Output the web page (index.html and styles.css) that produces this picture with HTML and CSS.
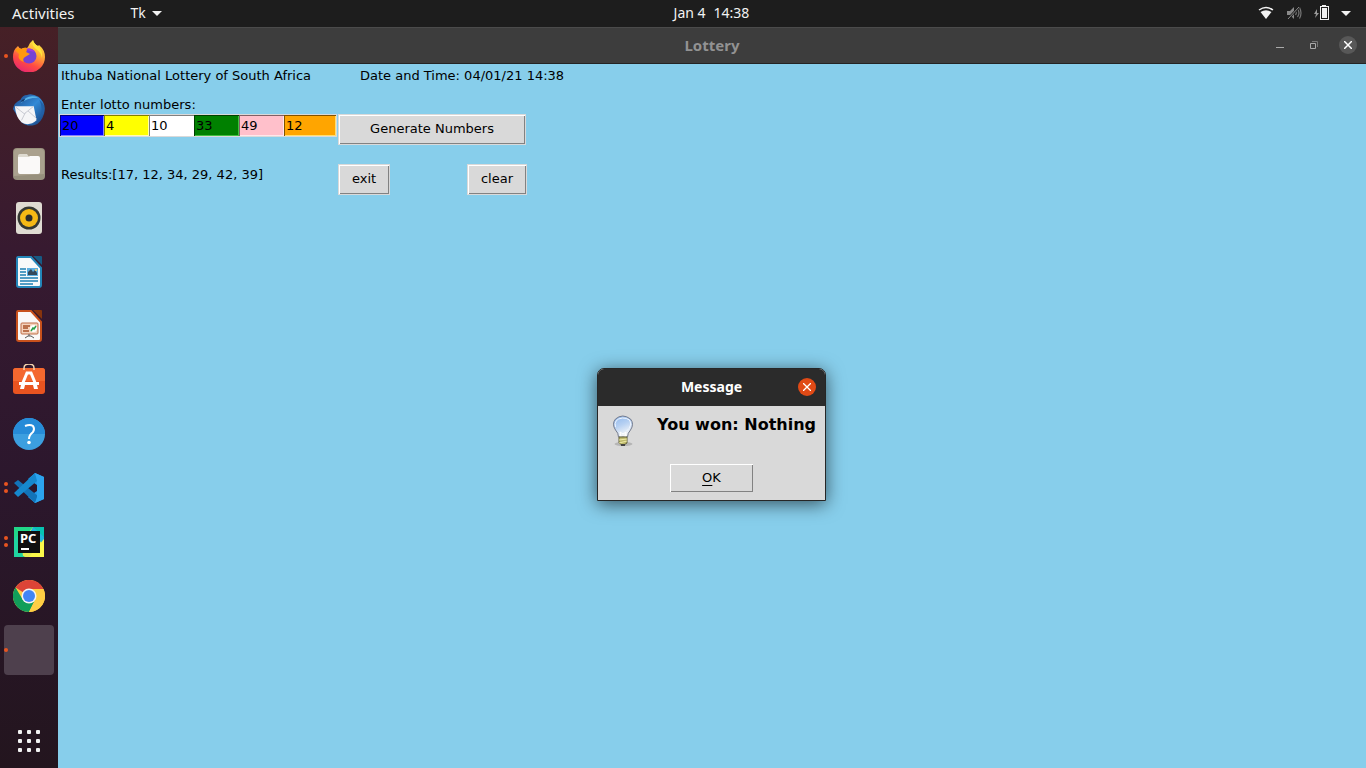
FILE: index.html
```html
<!DOCTYPE html>
<html lang="en">
<head>
<meta charset="utf-8">
<title>Lottery</title>
<link rel="stylesheet" href="styles.css">
</head>
<body>
<header class="topbar">
  <div class="topbar-left">
    <button class="bar-btn activities">Activities</button>
    <button class="bar-btn app-menu">Tk <svg width="10" height="5" viewBox="0 0 10 5"><path d="M0 0h10L5 5z" fill="#f2f2f2"/></svg></button>
  </div>
  <button class="bar-btn clock"><span>Jan 4</span><span>14:38</span></button>
  <button class="bar-btn status" aria-label="System menu">
    <svg width="16" height="14" viewBox="0 0 16 14"><path d="M1 4Q8-1 15 4" fill="none" stroke="#f2f2f2" stroke-width="1.500"/><path d="M2.500 6Q8 2.300 13.500 6L8 13z" fill="#f2f2f2"/></svg>
    <svg width="16" height="14" viewBox="0 0 16 14"><path d="M1 5h3l4-4v12L4 9H1z" fill="#8a8a8a"/><path d="M9.500 5q1.500 2 0 4M11.500 3q3 4 0 8M13.500 1.500q3 5.500 0 11" fill="none" stroke="#777" stroke-width="1.200"/><path d="M2 13L13 1" stroke="#1d1d1d" stroke-width="2.500"/><path d="M2 13L13 1" stroke="#8a8a8a"/></svg>
    <svg width="15" height="16" viewBox="0 0 15 16"><path d="M3 4L0 9h2l-1 4 4-5H3z" fill="#999"/><path d="M8 0h4v2H8z" fill="#f2f2f2"/><rect x="6.500" y="1.500" width="8" height="13" fill="none" stroke="#f2f2f2"/><path d="M8 3h5v10H8z" fill="#f2f2f2"/></svg>
    <svg width="10" height="5" viewBox="0 0 10 5"><path d="M0 0h10L5 5z" fill="#f2f2f2"/></svg>
  </button>
</header>

<div class="desktop">
  <nav class="dock" aria-label="Dock">
    <button class="launcher one" aria-label="Firefox"><svg viewBox="0 0 32 32">
      <defs><linearGradient id="fx" x1=".8" y1="0" x2=".3" y2="1"><stop offset="0" stop-color="#fff044"/><stop offset=".4" stop-color="#ffa436"/><stop offset=".7" stop-color="#ff4a43"/><stop offset="1" stop-color="#e62672"/></linearGradient></defs>
      <path d="M5 6q1 2 3 3 3-2 6-1l1-1q1-4 5-7 1 4 5 6l1-1q6 5 6 12A16 15.500 0 0 1 0 17Q0 10 4 7z" fill="url(#fx)"/>
      <circle cx="16" cy="16" r="7.500" fill="#7542d5"/><path d="M12 9q7-2 10 3l-5-1z" fill="#a13be0"/>
      <path d="M2 10q3-3 7-1 3-2 5-1 0 3-1 4l4 2-5 3q-3 2-1 5-7-2-5-8z" fill="#ff980e"/><path d="M20 0q1 4 5 6 5 5 4 12-1-6-6-9-5-3-3-9z" fill="#ffe63a"/></svg></button>
    <button class="launcher" aria-label="Thunderbird"><svg viewBox="0 0 34 34">
      <defs><linearGradient id="tb" x1="0" y1="0" x2="1" y2="1"><stop offset="0" stop-color="#1c4788"/><stop offset=".5" stop-color="#3289d6"/><stop offset="1" stop-color="#153c78"/></linearGradient></defs>
      <path d="M0 16Q1 9 8 6 10 1 15 1 20-1 27 3 36 10 33 21 30 31 23 33q-8 2-14-3z" fill="url(#tb)"/><path d="M8 10q8-11 19-6Q14 4 8 10z" fill="#58b5ea"/><path d="M28 6q5 10 0 20 6-6 5-14z" fill="#2260a7"/>
      <path d="M2 13l20 0 3 15q-8 7-16 2-6-5-7-17z" fill="#f5f5f7"/><path d="M3 14l9 7 10-8M9 28l4-8M25 26l-9-8" fill="none" stroke="#c5c8d0"/><path d="M8 8q2-3 5-3l-2 3z" fill="#123b6e"/></svg></button>
    <button class="launcher" aria-label="Files"><svg viewBox="0 0 32 32"><rect width="32" height="32" rx="4" fill="#97907d"/><path d="M1 28V4q0-3 3-3h24q3 0 3 3v22z" fill="#aaa18e"/><path d="M5 23V8q0-2 2-2h7l2 3v14z" fill="#dedbd1"/><path d="M5 9h10l2-1h8q2 0 2 2v14q0 2-2 2H7q-2 0-2-2z" fill="#faf9f8"/></svg></button>
    <button class="launcher" aria-label="Rhythmbox"><svg viewBox="0 0 32 32"><rect x="3" width="26" height="32" rx="3" fill="#dfdbd2"/><circle cx="16" cy="16" r="11.500" fill="#343832"/><circle cx="16" cy="16" r="9" fill="#f5b915"/><circle cx="16" cy="16" r="3.500" fill="#292c2d"/></svg></button>
    <button class="launcher" aria-label="LibreOffice Writer"><svg viewBox="0 0 32 32"><path d="M20 0h8q1 0 1 1v8z" fill="#165a84"/><path d="M5 1h13l10 11v17q0 2-2 2H6q-2 0-2-2V3q0-2 1-2z" fill="#f7f9fa" stroke="#2386b9" stroke-width="2"/><path d="M7 13h6M7 16h6M7 19h6M7 22h18M7 25h18M7 28h13" stroke="#1c7fb2" stroke-width="1.500"/><path d="M14 12h11v8H14z" fill="#5caee0"/><path d="M15 19v-3l3-3 2 3 2-2 2 3v2z" fill="#34485a"/><circle cx="23" cy="14" r="1" fill="#ffd35c"/></svg></button>
    <button class="launcher" aria-label="LibreOffice Impress"><svg viewBox="0 0 32 32"><path d="M20 0h8q1 0 1 1v8z" fill="#87340d"/><path d="M5 1h13l10 11v17q0 2-2 2H6q-2 0-2-2V3q0-2 1-2z" fill="#faf8f7" stroke="#c8511c" stroke-width="2"/><rect x="8" y="13" width="17" height="11" rx="1" fill="#f4d3bd" stroke="#bf6d46"/><path d="M10 16h7M10 18h5M10 21h6" stroke="#a85127" stroke-width="1.300"/><circle cx="20.500" cy="18.500" r="3.500" fill="#fff"/><path d="M18 21l2-3 1 1 2-3" fill="none" stroke="#2a9e48" stroke-width="1.500"/><path d="M16 24v2M12 28l3-2h3l3 2" fill="none" stroke="#555"/></svg></button>
    <button class="launcher" aria-label="Ubuntu Software"><svg viewBox="0 0 32 32"><rect y="4" width="32" height="26" rx="3" fill="#e95420"/><path d="M0 17V7q0-3 3-3h26q3 0 3 3v10z" fill="#f4682f"/><path d="M11 6V4q0-4 5-4t5 4v2" fill="none" stroke="#f5d3ad" stroke-width="1.500"/><path d="M9 21l5-12h4l5 12" fill="none" stroke="#fff" stroke-width="3"/><path d="M6 18h20v3H6zM8 21h4l-1 4H7zM20 21h4l1 4h-4z" fill="#fff"/></svg></button>
    <button class="launcher" aria-label="Help"><svg viewBox="0 0 32 32"><circle cx="16" cy="16" r="16" fill="#3c9fe0"/><path d="M0 16a16 16 0 0 1 32 0z" fill="#268bd8"/><path d="M12 8q5-2 8 0 2 3 0 6-4 3-4 7" fill="none" stroke="#fff" stroke-width="2"/><circle cx="16" cy="24.500" r="1.800" fill="#fff"/></svg></button>
    <button class="launcher two" aria-label="Visual Studio Code"><svg viewBox="0 0 32 32"><path d="M22 1l9 4v22l-9 4-7-6 9-6V13L15 7z" fill="#2399e8"/><path d="M1 11l4-3 20 16-3 7z" fill="#1273b8"/><path d="M1 21l4 4L24 9l-2-8z" fill="#1688ce"/><path d="M22 1l9 4v22l-9 4 2-6V8z" fill="#2ca4ef"/></svg></button>
    <button class="launcher two" aria-label="PyCharm"><svg viewBox="0 0 32 32"><path d="M1 1h30v30H1z" fill="#21d789"/><path d="M20 1l11 10v20H12L1 24z" fill="#e8ed4e"/><path d="M20 1h11v16L20 7z" fill="#07c3b2"/><path d="M20 1l11 10v8L17 6z" fill="#20b5dc"/><path d="M1 13l7-7 2 25H1z" fill="#20d5a0"/><path d="M16 31l15-18v18z" fill="#fcf84a"/><path d="M5 5h22v22H5z" fill="#101010"/><text x="7" y="17" class="pc">PC</text><path d="M8 22h8v2H8z" fill="#fff"/></svg></button>
    <button class="launcher" aria-label="Chrome"><svg viewBox="0 0 32 32"><circle cx="16" cy="16" r="16" fill="#ffce44"/><path d="M16 16L2.500 7.500A16 16 0 0 1 30.500 9H16z" fill="#dc4437"/><path d="M2.500 7.500L10 20l12 0-6 12A16 16 0 0 1 2.500 7.500z" fill="#119e5a"/><path d="M16 9h14.500A16 16 0 0 1 16 32l6-12z" fill="#ffce44"/><circle cx="16" cy="16" r="7.500" fill="#f4f4f4"/><circle cx="16" cy="16" r="6" fill="#4285f4"/></svg></button>
    <button class="launcher one active" aria-label="Tk"></button>
    <button class="launcher apps" aria-label="Show Applications"><svg viewBox="0 0 32 32" fill="#f2f2f2"><rect x="5" y="5" width="4" height="4" rx="1"/><rect x="14" y="5" width="4" height="4" rx="1"/><rect x="23" y="5" width="4" height="4" rx="1"/><rect x="5" y="14" width="4" height="4" rx="1"/><rect x="14" y="14" width="4" height="4" rx="1"/><rect x="23" y="14" width="4" height="4" rx="1"/><rect x="5" y="23" width="4" height="4" rx="1"/><rect x="14" y="23" width="4" height="4" rx="1"/><rect x="23" y="23" width="4" height="4" rx="1"/></svg></button>
  </nav>

  <main class="window">
    <div class="titlebar">
      <h1 class="title">Lottery</h1>
      <div class="window-controls">
        <button class="win-btn" aria-label="Minimize"><svg width="8" height="8" viewBox="0 0 8 8"><path d="M0 6.500h8" stroke="#aaa"/></svg></button>
        <button class="win-btn" aria-label="Restore"><svg width="8" height="8" viewBox="0 0 8 8" fill="none"><path d="M.5 2.500h5v5h-5z" stroke="#aaa"/><path d="M2 .5h5.500V6" stroke="#777"/></svg></button>
        <button class="win-btn close" aria-label="Close"><svg width="8" height="8" viewBox="0 0 8 8"><path d="M0 0l8 8M8 0L0 8" stroke="#fff" stroke-width="1.500"/></svg></button>
      </div>
    </div>
    <form class="lottery">
      <div class="row heading"><span class="first">Ithuba National Lottery of South Africa</span><span>Date and Time: 04/01/21 14:38</span></div>
      <label class="row prompt" for="n1">Enter lotto numbers:</label>
      <div class="row entry-row">
        <div class="first numbers">
          <input class="number blue" id="n1" value="20">
          <input class="number yellow" value="4" aria-label="Number 2">
          <input class="number white" value="10" aria-label="Number 3">
          <input class="number green" value="33" aria-label="Number 4">
          <input class="number pink" value="49" aria-label="Number 5">
          <input class="number orange" value="12" aria-label="Number 6">
        </div>
        <button type="button" class="tk-btn generate">Generate Numbers</button>
      </div>
      <div class="row result-row">
        <output class="first results">Results:[17, 12, 34, 29, 42, 39]</output>
        <div class="actions"><button type="button" class="tk-btn">exit</button><button type="button" class="tk-btn">clear</button></div>
      </div>
    </form>
  </main>
</div>

<section class="dialog" role="dialog" aria-labelledby="dialog-title">
  <div class="dialog-bar">
    <h2 class="dialog-title" id="dialog-title">Message</h2>
    <button class="dialog-close" aria-label="Close"><svg width="8" height="8" viewBox="0 0 8 8"><path d="M0 0l8 8M8 0L0 8" stroke="#fff" stroke-width="1.300"/></svg></button>
  </div>
  <div class="dialog-body">
    <div class="message">
      <svg width="24" height="32" viewBox="0 0 24 32">
        <defs><linearGradient id="bulb" x1="0" y1="0" x2=".4" y2="1"><stop offset="0" stop-color="#8db6eb"/><stop offset=".5" stop-color="#b6d0f2"/><stop offset="1" stop-color="#f6f7f8"/></linearGradient></defs>
        <ellipse cx="12.500" cy="29" rx="9" ry="2" fill="#b5b5b5"/>
        <path d="M7.500 22q0-4-3-7-4-6 0-11 7-6 15 0 4 5 0 11-3 3-3 7z" fill="url(#bulb)" stroke="#747b8d"/><path d="M4.500 12q-2-8 7-9 9 0 8 7-1 4-4 6" fill="none" stroke="#eef5ff"/><path d="M10 22l-1-5 3 2 3-2-1 5" fill="none" stroke="#fff"/><path d="M8 22h8v6l-3 2h-2l-3-2z" fill="#bdb96b" stroke="#67653d"/><path d="M8 25l8-1M8 28l8-2" stroke="#eee9a5"/><path d="M10 29h4v2h-4z" fill="#444"/></svg>
      <p class="message-text">You won: Nothing</p>
    </div>
    <button class="tk-btn ok"><span><u>O</u>K</span></button>
  </div>
</section>
</body>
</html>
```
FILE: styles.css
```css
* { box-sizing: border-box; }
body {
  margin: 0;
  min-height: 100vh;
  display: flex;
  flex-direction: column;
  font: 13px/18px "DejaVu Sans", sans-serif;
  color: #000;
}
button, input { font: inherit; color: inherit; }
button { padding: 0; border: 0; background: none; }
h1, h2, p { margin: 0; }
svg { display: block; flex: none; }

.topbar {
  display: grid;
  grid-template-columns: 1fr auto 1fr;
  align-items: center;
  height: 27px;
  padding: 0 15px 1px 12px;
  background: #1d1d1d;
  color: #f2f2f2;
  font-family: "Noto Sans", sans-serif;
  font-size: 14px;
}
.topbar-left { display: flex; gap: 56px; }
.bar-btn { display: flex; align-items: center; gap: 6px; }
.activities { font-size: 15px; }
.clock { gap: 8px; margin-left: 60px; }
.status { justify-self: end; gap: 12px; }

.desktop { flex: 1; display: flex; }
.dock {
  width: 58px;
  display: flex;
  flex-direction: column;
  align-items: center;
  gap: 4px;
  padding: 4px 4px 2px;
  background: linear-gradient(#462026, #371a30 30%, #2c172d 60%, #23151e);
}
.launcher {
  width: 50px;
  height: 50px;
  display: grid;
  place-items: center;
  border-radius: 4px;
  position: relative;
}
.launcher svg { width: 32px; height: 32px; }
.launcher.active { background: #4e404d; }
.launcher.apps { margin-top: auto; }
.one::before, .two::before, .two::after {
  content: "";
  position: absolute;
  left: 0;
  top: 23px;
  width: 4px;
  height: 4px;
  border-radius: 50%;
  background: #e95420;
}
.two::before { top: 19px; }
.two::after { top: 26px; }
.pc { font: bold 13px "Noto Sans", sans-serif; fill: #fff; }

.window { flex: 1; display: flex; flex-direction: column; background: #87ceeb; }
.titlebar {
  display: grid;
  grid-template-columns: 1fr auto 1fr;
  align-items: center;
  height: 37px;
  padding-bottom: 1px;
  background: #3d3d3d;
  border-top: 1px solid #4b4b4b;
  border-bottom: 1px solid #242424;
}
.title {
  grid-column: 2;
  color: #929292;
  font: bold 15px/18px "Noto Sans", sans-serif;
}
.window-controls { display: flex; justify-self: end; gap: 16px; padding-right: 9px; }
.win-btn { width: 18px; height: 18px; display: grid; place-items: center; border-radius: 50%; }
.win-btn.close { background: #585858; }

.lottery { padding: 3px 1px; }
.row { display: flex; align-items: flex-start; }
.first { width: 279px; }
.heading { padding-left: 2px; }
.heading .first { width: 299px; }
.prompt { margin-top: 11px; padding-left: 2px; }
.numbers { display: flex; }
.number {
  width: 45px;
  height: 23px;
  padding: 0 2px 1px;
  border: 1px solid #d9d9d9;
  border-width: 1px 0;
  border-radius: 0;
  outline: 0;
}
.number:last-child { width: 53px; border-right-width: 1px; }
.number:first-child { border-left-width: 1px; }
.blue { background: #0000ff; box-shadow: inset 1px 1px #000080, inset -1px -1px #8080ff; }
.yellow { background: #ffff00; box-shadow: inset 1px 1px #808000, inset -1px -1px #ffffb0; }
.white { background: #ffffff; box-shadow: inset 1px 1px #808080, inset -1px -1px #ffffff; }
.green { background: #008000; box-shadow: inset 1px 1px #004000, inset -1px -1px #40c040; }
.pink { background: #ffc0cb; box-shadow: inset 1px 1px #806066, inset -1px -1px #ffe6eb; }
.orange { background: #ffa500; box-shadow: inset 1px 1px #805200, inset -1px -1px #ffdf70; }

.tk-btn {
  height: 31px;
  padding: 0 13px 1px;
  border: 1px solid #d9d9d9;
  background: #d9d9d9;
  box-shadow: inset 1px 1px #fff, inset -1px -1px #828282;
}
.generate { width: 188px; }
.result-row { margin-top: 19px; }
.results { padding: 2px; }
.actions { width: 189px; display: flex; justify-content: space-between; }

.dialog {
  position: absolute;
  left: 597px;
  top: 368px;
  width: 229px;
  border: 1px solid #262626;
  border-radius: 7px 7px 0 0;
  background: #d9d9d9;
  box-shadow: 0 3px 18px rgba(0, 0, 0, 0.6);
}
.dialog-bar {
  display: grid;
  grid-template-columns: 1fr auto 1fr;
  align-items: center;
  height: 37px;
  padding-bottom: 1px;
  border-radius: 6px 6px 0 0;
  background: #2b2b2b;
}
.dialog-title { grid-column: 2; color: #fff; font: bold 14px/18px "Noto Sans", sans-serif; }
.dialog-close {
  width: 18px;
  height: 18px;
  margin-right: 9px;
  display: grid;
  place-items: center;
  justify-self: end;
  border-radius: 50%;
  background: #e04a16;
}
.dialog-body { display: flex; flex-direction: column; align-items: center; padding: 9px 9px 8px; }
.message { align-self: stretch; display: flex; justify-content: space-between; padding-left: 4px; }
.message-text { font-size: 16px; line-height: 20px; font-weight: bold; white-space: nowrap; }
.ok { width: 83px; height: 28px; margin-top: 17px; border: 0; }
.ok u { text-underline-offset: 3px; }
```
